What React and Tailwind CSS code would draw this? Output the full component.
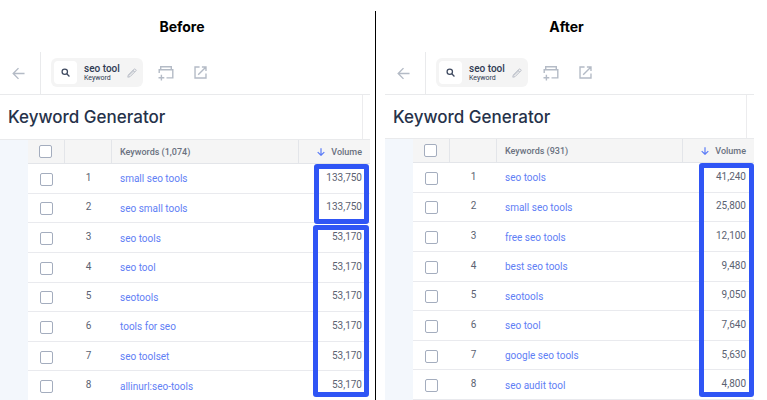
import React from "react";

const before = {
  id: "before",
  heading: "Before",
  count: "1,074",
  rows: [
    ["small seo tools", "133,750"],
    ["seo small tools", "133,750"],
    ["seo tools", "53,170"],
    ["seo tool", "53,170"],
    ["seotools", "53,170"],
    ["tools for seo", "53,170"],
    ["seo toolset", "53,170"],
    ["allinurl:seo-tools", "53,170"],
  ],
};

const after = {
  id: "after",
  heading: "After",
  count: "931",
  rows: [
    ["seo tools", "41,240"],
    ["small seo tools", "25,800"],
    ["free seo tools", "12,100"],
    ["best seo tools", "9,480"],
    ["seotools", "9,050"],
    ["seo tool", "7,640"],
    ["google seo tools", "5,630"],
    ["seo audit tool", "4,800"],
  ],
};

function ArrowLeft() {
  return (
    <svg width="13" height="13" viewBox="0 0 14 14" fill="none" stroke="#b4bbc6" strokeWidth="1.5">
      <path d="M13.500 7H1.600M7 1.200 1.300 7 7 12.800" />
    </svg>
  );
}

function SearchIcon() {
  return (
    <svg width="9" height="9" viewBox="0 0 10 10" fill="none" stroke="#3f4a60" strokeWidth="1.400">
      <circle cx="4.200" cy="4.200" r="3" />
      <path d="M6.400 6.400l3 3" />
    </svg>
  );
}

function PencilIcon() {
  return (
    <svg width="10" height="10" viewBox="0 0 10 10" fill="none" stroke="#b9bec7" strokeWidth="1">
      <path d="M.8 9.200 1.300 7 7.200 1.100a.7.7 0 0 1 1 0l.7.7a.7.7 0 0 1 0 1L3 8.700Z M6 2.300l1.700 1.700 M1.700 7.500 7 2.500" />
    </svg>
  );
}

function AddListIcon() {
  return (
    <svg width="16" height="16" viewBox="0 0 16 16" fill="none" stroke="#b4bbc6" strokeWidth="1.400">
      <path d="M2.700 4V1.700h10.600V4M1.200 8V4.700h13.600v8.200H8.500M.5 12.700h5.800M3.400 9.800v5.800" />
    </svg>
  );
}

function OpenIcon() {
  return (
    <svg width="13" height="13" viewBox="0 0 14 14" fill="none" stroke="#b4bbc6" strokeWidth="1.500">
      <path d="M6 1.100H1.100v11.800h11.800V8M8.500 1.100h4.400v4.400M12.900 1.100 4.500 9.500" />
    </svg>
  );
}

function SortIcon() {
  return (
    <svg width="8" height="8" viewBox="0 0 8 8" fill="none" stroke="#5b7cf7" strokeWidth="1.200">
      <path d="M4 .2v7M.7 4.100 4 7.300l3.300-3.200" />
    </svg>
  );
}

function Tick({ label }) {
  return (
    <input
      type="checkbox"
      aria-label={label}
      className="block size-[13px] appearance-none rounded-[2px] border border-[#a4adbe] bg-white"
    />
  );
}

function Highlights({ id }) {
  const box = "absolute rounded-[3px] border-[5px] border-[#2f55f5]";
  if (id === "before") {
    return (
      <div className="pointer-events-none absolute inset-y-0 right-0 w-[58px]">
        <div className={`${box} top-6 right-px h-[60px] w-[55px]`} />
        <div className={`${box} top-[85px] right-px h-[172px] w-14`} />
      </div>
    );
  }
  return (
    <div className="pointer-events-none absolute inset-y-0 right-0 w-[58px]">
      <div className={`${box} top-6 right-0 h-[234px] w-[55px]`} />
    </div>
  );
}

function Panel({ data, titleHeight }) {
  return (
    <section className="flex min-w-0 flex-col">
      <h2 className="pt-[17px] pr-1.5 pb-[15px] text-center font-['Inter'] text-sm leading-5 font-bold text-black">
        {data.heading}
      </h2>
      <div className="flex h-[43px] items-center border-b border-[#e9eaec] pb-px">
        <div className="-mb-px flex h-[43px] w-[41px] items-center border-r border-[#e9eaec] pl-3">
          <button type="button" aria-label="Back">
            <ArrowLeft />
          </button>
        </div>
        <div className="ml-2.5 flex h-[29px] w-[92px] items-center rounded-md bg-[#f4f4f4] pl-[3px]">
          <span className="flex size-[23px] items-center justify-center rounded bg-white">
            <SearchIcon />
          </span>
          <div className="ml-[7px] w-[43px] font-['Roboto'] text-[#2f3a52]">
            <div className="text-[10px] leading-[10px] font-medium whitespace-nowrap">seo tool</div>
            <div className="text-[7px] leading-[8px]">Keyword</div>
          </div>
          <button type="button" aria-label="Edit keyword">
            <PencilIcon />
          </button>
        </div>
        <button type="button" aria-label="Add to list" className="ml-[15px]">
          <AddListIcon />
        </button>
        <button type="button" aria-label="Open in new tab" className="ml-5">
          <OpenIcon />
        </button>
      </div>
      <div className={`${titleHeight} flex pr-[7px]`}>
        <h1 className="flex flex-1 items-center border-r border-[#ececee] pt-0.5 pl-2 font-['Inter'] text-[17px] font-medium text-[#26324a]">
          Keyword Generator
        </h1>
      </div>
      <div className="relative flex-1 border-t border-[#e9eaec] bg-[#f3f7fc] pl-7">
        <table className="h-[261px] w-full table-fixed border-separate border-spacing-0 bg-white font-['Roboto'] text-[10px] leading-3 text-[#5b6271]">
          <thead>
            <tr className="h-6 bg-[#f5f5f5] text-[9px] font-medium text-[#6a7180]">
              <th className="w-[37px] border-r border-b border-[#e3e5e9] p-0 pl-[11px]">
                <Tick label="Select all keywords" />
              </th>
              <th className="w-[47px] border-r border-b border-[#e3e5e9] p-0" />
              <th className="border-r border-b border-[#e3e5e9] p-0 pl-2 text-left font-medium">
                Keywords ({data.count})
              </th>
              <th className="w-[71px] border-b border-[#e3e5e9] p-0 pr-2 font-medium">
                <span className="flex items-center justify-end gap-1.5">
                  <SortIcon />
                  Volume
                </span>
              </th>
            </tr>
          </thead>
          <tbody>
            {data.rows.map(([keyword, volume], i) => (
              <tr key={keyword}>
                <td className="border-b border-[#e9eaee] p-0 pt-0.5 pl-3">
                  <Tick label={`Select ${keyword}`} />
                </td>
                <td className="border-b border-[#e9eaee] p-0 pb-px text-center">{i + 1}</td>
                <td className="border-b border-[#e9eaee] p-0 pt-0.5 pl-2">
                  <a href="#keyword" className="whitespace-nowrap text-[#5f80f5]">
                    {keyword}
                  </a>
                </td>
                <td className="border-b border-[#e9eaee] p-0 pr-2 pb-px text-right">{volume}</td>
              </tr>
            ))}
          </tbody>
        </table>
        <Highlights id={data.id} />
      </div>
    </section>
  );
}

export default function App() {
  return (
    <main className="grid max-h-screen grid-cols-[375fr_1px_378fr] overflow-hidden bg-white pr-[13px]">
      <div className="grid pr-[5px]">
        <Panel data={before} titleHeight="h-11" />
      </div>
      <div className="mt-[11px] bg-black" />
      <div className="grid pl-[9px]">
        <Panel data={after} titleHeight="h-[43px]" />
      </div>
    </main>
  );
}
